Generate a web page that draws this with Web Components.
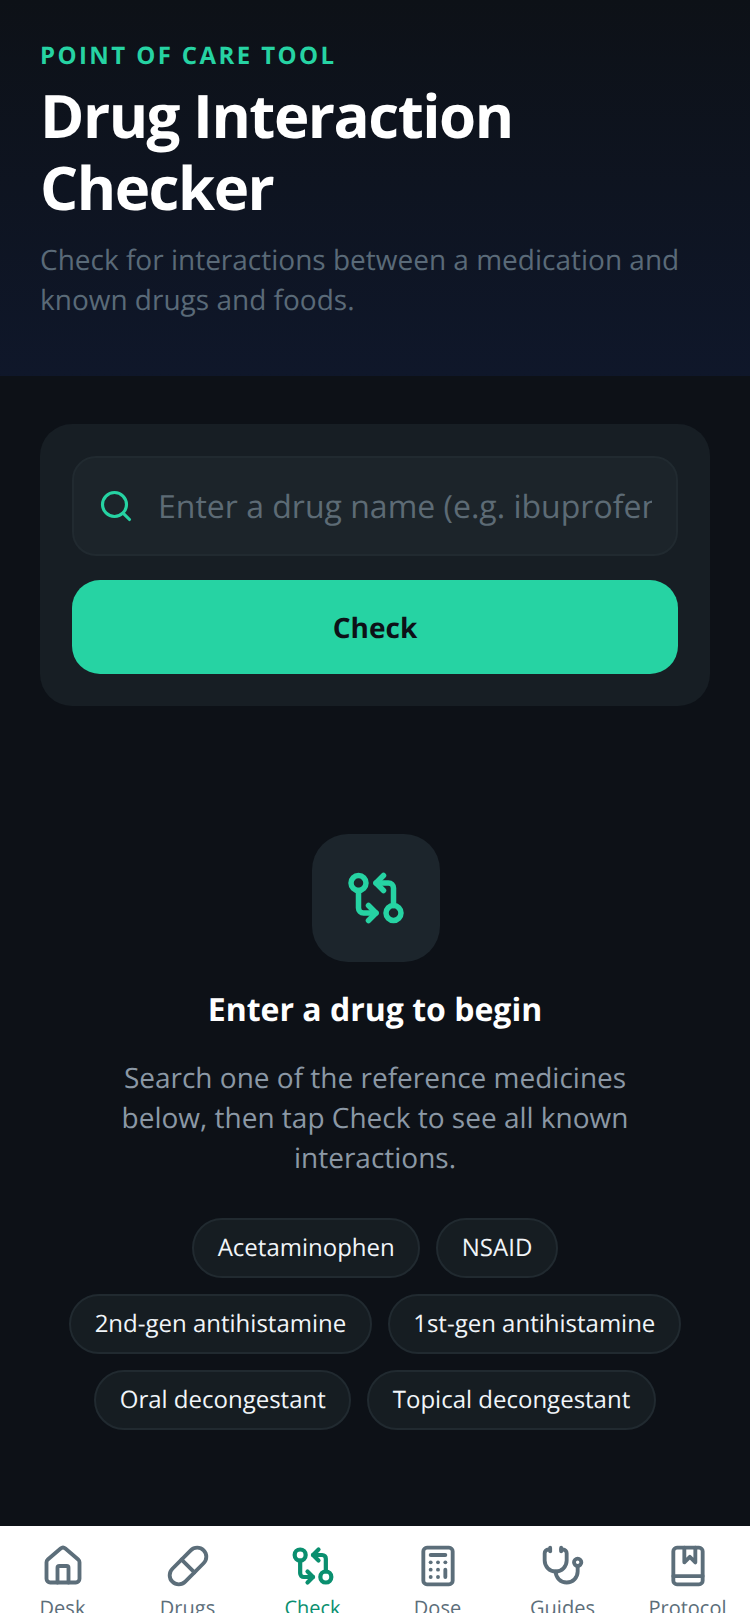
<!DOCTYPE html>
<html lang="en">
<head>
<meta charset="utf-8">
<title>Drug Interaction Checker</title>
<style>
  html, body {
    margin: 0;
    height: 100%;
    background: #0d1117;
    font-family: "Open Sans", "Noto Sans", sans-serif;
    text-rendering: geometricPrecision;
  }
</style>
</head>
<body>
<app-shell>
  <page-header slot="header" eyebrow="POINT OF CARE TOOL">
    <span slot="title">Drug Interaction Checker</span>
    Check for interactions between a medication and known drugs and foods.
  </page-header>
  <search-card placeholder="Enter a drug name (e.g. ibuprofen)" action="Check"></search-card>
  <empty-state heading="Enter a drug to begin">
    <span slot="text">Search one of the reference medicines below, then tap Check to see all known interactions.</span>
    <drug-chip>Acetaminophen</drug-chip>
    <drug-chip>NSAID</drug-chip>
    <drug-chip>2nd-gen antihistamine</drug-chip>
    <drug-chip>1st-gen antihistamine</drug-chip>
    <drug-chip>Oral decongestant</drug-chip>
    <drug-chip>Topical decongestant</drug-chip>
  </empty-state>
  <tab-bar slot="nav">
    <tab-item icon="house">Desk</tab-item>
    <tab-item icon="pill">Drugs</tab-item>
    <tab-item icon="compare" active>Check</tab-item>
    <tab-item icon="calculator">Dose</tab-item>
    <tab-item icon="stethoscope">Guides</tab-item>
    <tab-item icon="book">Protocol</tab-item>
  </tab-bar>
</app-shell>

<script>
const ICONS = {
  search: `<circle cx="11" cy="11" r="8"/><path d="m21 21-4.3-4.3"/>`,
  house: `<path d="M15 21v-8a1 1 0 0 0-1-1h-4a1 1 0 0 0-1 1v8"/><path d="M3 10a2 2 0 0 1 .709-1.528l7-5.999a2 2 0 0 1 2.582 0l7 5.999A2 2 0 0 1 21 10v9a2 2 0 0 1-2 2H5a2 2 0 0 1-2-2z"/>`,
  pill: `<path d="m10.5 20.5 10-10a4.95 4.95 0 1 0-7-7l-10 10a4.95 4.95 0 1 0 7 7Z"/><path d="m8.5 8.5 7 7"/>`,
  compare: `<circle cx="5" cy="6" r="3"/><path d="M12 6h5a2 2 0 0 1 2 2v7"/><path d="m15 9-3-3 3-3"/><circle cx="19" cy="18" r="3"/><path d="M12 18H7a2 2 0 0 1-2-2V9"/><path d="m9 15 3 3-3 3"/>`,
  calculator: `<rect width="16" height="20" x="4" y="2" rx="2"/><path d="M8 6h8"/><path d="M16 14v4"/><path d="M16 10h.01"/><path d="M12 10h.01"/><path d="M8 10h.01"/><path d="M12 14h.01"/><path d="M8 14h.01"/><path d="M12 18h.01"/><path d="M8 18h.01"/>`,
  stethoscope: `<path d="M11 2v2"/><path d="M5 2v2"/><path d="M5 3H4a2 2 0 0 0-2 2v4a6 6 0 0 0 12 0V5a2 2 0 0 0-2-2h-1"/><path d="M8 15a6 6 0 0 0 12 0v-3"/><circle cx="20" cy="10" r="2"/>`,
  book: `<rect width="16" height="20" x="4" y="2" rx="2"/><path d="M10 2v8l3-3 3 3V2"/><path d="M4 17.5h16"/>`,
};

/**
 * Stroke icon, drawn on a 24 unit grid
 */
class AppIcon extends HTMLElement {
  connectedCallback() {
    const size = this.getAttribute("size") || 44;
    const stroke = this.getAttribute("stroke") || 2.1;
    this.attachShadow({ mode: "open" });
    this.shadowRoot.innerHTML = `
      <style>
        :host { display: block; width: ${size}px; height: ${size}px; flex: none; }
        svg { display: block; width: 100%; height: 100%; }
      </style>
      <svg viewBox="0 0 24 24" fill="none" stroke="currentColor" stroke-width="${stroke}"
        stroke-linecap="round" stroke-linejoin="round">${ICONS[this.getAttribute("name")]}</svg>`;
  }
}

class AppShell extends HTMLElement {
  constructor() {
    super();
    this.attachShadow({ mode: "open" });
    this.shadowRoot.innerHTML = `
      <style>
        :host { display: flex; flex-direction: column; height: 100vh; overflow: hidden; }
        main { flex: 1; min-height: 0; padding: 48px 40px 0; overflow: hidden; }
      </style>
      <slot name="header"></slot>
      <main><slot></slot></main>
      <slot name="nav"></slot>`;
  }
}

class PageHeader extends HTMLElement {
  connectedCallback() {
    this.attachShadow({ mode: "open" });
    this.shadowRoot.innerHTML = `
      <style>
        :host {
          display: block;
          height: 376px;
          box-sizing: border-box;
          padding: 40px 40px 0;
          background: linear-gradient(180deg, #0d1117 0%, #0f172a 100%);
        }
        .eyebrow {
          font-size: 24px;
          line-height: 32px;
          font-weight: 700;
          letter-spacing: 2.4px;
          color: #26d3a3;
        }
        h1 {
          margin: 7px 0 17px;
          font-size: 60px;
          line-height: 72px;
          font-weight: 700;
          letter-spacing: -1.5px;
          color: #fff;
        }
        p {
          margin: 0;
          font-size: 28px;
          line-height: 40px;
          color: #5a6a78;
        }
      </style>
      <div class="eyebrow">${this.getAttribute("eyebrow")}</div>
      <h1><slot name="title"></slot></h1>
      <p><slot></slot></p>`;
  }
}

class SearchCard extends HTMLElement {
  connectedCallback() {
    this.attachShadow({ mode: "open" });
    this.shadowRoot.innerHTML = `
      <style>
        :host {
          display: flex;
          flex-direction: column;
          gap: 24px;
          padding: 32px;
          border-radius: 32px;
          background: #171e24;
        }
        label {
          display: flex;
          align-items: center;
          gap: 24px;
          height: 100px;
          box-sizing: border-box;
          padding: 0 24px;
          border: 2px solid #212a30;
          border-radius: 24px;
          background: #1c242a;
          color: #26d3a3;
        }
        input {
          flex: 1;
          min-width: 0;
          padding: 0;
          border: 0;
          outline: 0;
          background: none;
          font: 400 32px "Open Sans", "Noto Sans", sans-serif;
          text-rendering: geometricPrecision;
          color: #fff;
        }
        input::placeholder { color: #5d6b75; opacity: 1; }
        button {
          height: 94px;
          padding: 2px 0 0;
          border: 0;
          border-radius: 28px;
          background: #26d3a3;
          font: 700 28px "Open Sans", "Noto Sans", sans-serif;
          text-rendering: geometricPrecision;
          color: #0d1117;
        }
      </style>
      <label>
        <app-icon name="search" size="36"></app-icon>
        <input type="text" placeholder="${this.getAttribute("placeholder")}">
      </label>
      <button type="button">${this.getAttribute("action")}</button>`;
  }
}

class EmptyState extends HTMLElement {
  connectedCallback() {
    this.attachShadow({ mode: "open" });
    this.shadowRoot.innerHTML = `
      <style>
        :host {
          display: flex;
          flex-direction: column;
          align-items: center;
          padding-top: 128px;
          text-align: center;
        }
        .badge {
          display: flex;
          align-items: center;
          justify-content: center;
          width: 128px;
          height: 128px;
          margin-left: 2px;
          border-radius: 36px;
          background: #1c252c;
          color: #26d3a3;
        }
        h2 {
          margin: 26px 0 0;
          font-size: 32px;
          line-height: 44px;
          font-weight: 700;
          color: #fff;
        }
        p {
          margin: 26px 0 0;
          max-width: 560px;
          font-size: 28px;
          line-height: 40px;
          color: #8b98a5;
        }
        .chips {
          display: flex;
          flex-wrap: wrap;
          justify-content: center;
          gap: 16px;
          margin-top: 40px;
        }
      </style>
      <div class="badge"><app-icon name="compare" size="60" stroke="2.2"></app-icon></div>
      <h2>${this.getAttribute("heading")}</h2>
      <p><slot name="text"></slot></p>
      <div class="chips"><slot></slot></div>`;
  }
}

class DrugChip extends HTMLElement {
  constructor() {
    super();
    this.attachShadow({ mode: "open" });
    this.shadowRoot.innerHTML = `
      <style>
        :host {
          display: block;
          box-sizing: border-box;
          height: 60px;
          padding: 0 23.5px;
          border: 2px solid #212a30;
          border-radius: 30px;
          background: #161d22;
          font-size: 24px;
          line-height: 56px;
          color: #f1f5f9;
        }
      </style>
      <slot></slot>`;
  }
}

class TabBar extends HTMLElement {
  constructor() {
    super();
    this.attachShadow({ mode: "open" });
    this.shadowRoot.innerHTML = `
      <style>
        :host { display: block; background: #fff; padding-bottom: 11px; }
        div { display: grid; grid-template-columns: repeat(6, 1fr); height: 87px; overflow: hidden; }
      </style>
      <div><slot></slot></div>`;
  }
}

class TabItem extends HTMLElement {
  connectedCallback() {
    const active = this.hasAttribute("active");
    this.attachShadow({ mode: "open" });
    this.shadowRoot.innerHTML = `
      <style>
        :host {
          display: flex;
          flex-direction: column;
          align-items: center;
          gap: 6px;
          padding-top: 18px;
          color: ${active ? "#0a8f6f" : "#5c6e7a"};
          font-size: 20px;
          line-height: 28px;
        }
      </style>
      <app-icon name="${this.getAttribute("icon")}" size="44" stroke="${active ? 2.3 : 2.1}"></app-icon>
      <slot></slot>`;
  }
}

window.customElements.define("app-icon", AppIcon);
window.customElements.define("app-shell", AppShell);
window.customElements.define("page-header", PageHeader);
window.customElements.define("search-card", SearchCard);
window.customElements.define("empty-state", EmptyState);
window.customElements.define("drug-chip", DrugChip);
window.customElements.define("tab-bar", TabBar);
window.customElements.define("tab-item", TabItem);
</script>
</body>
</html>
